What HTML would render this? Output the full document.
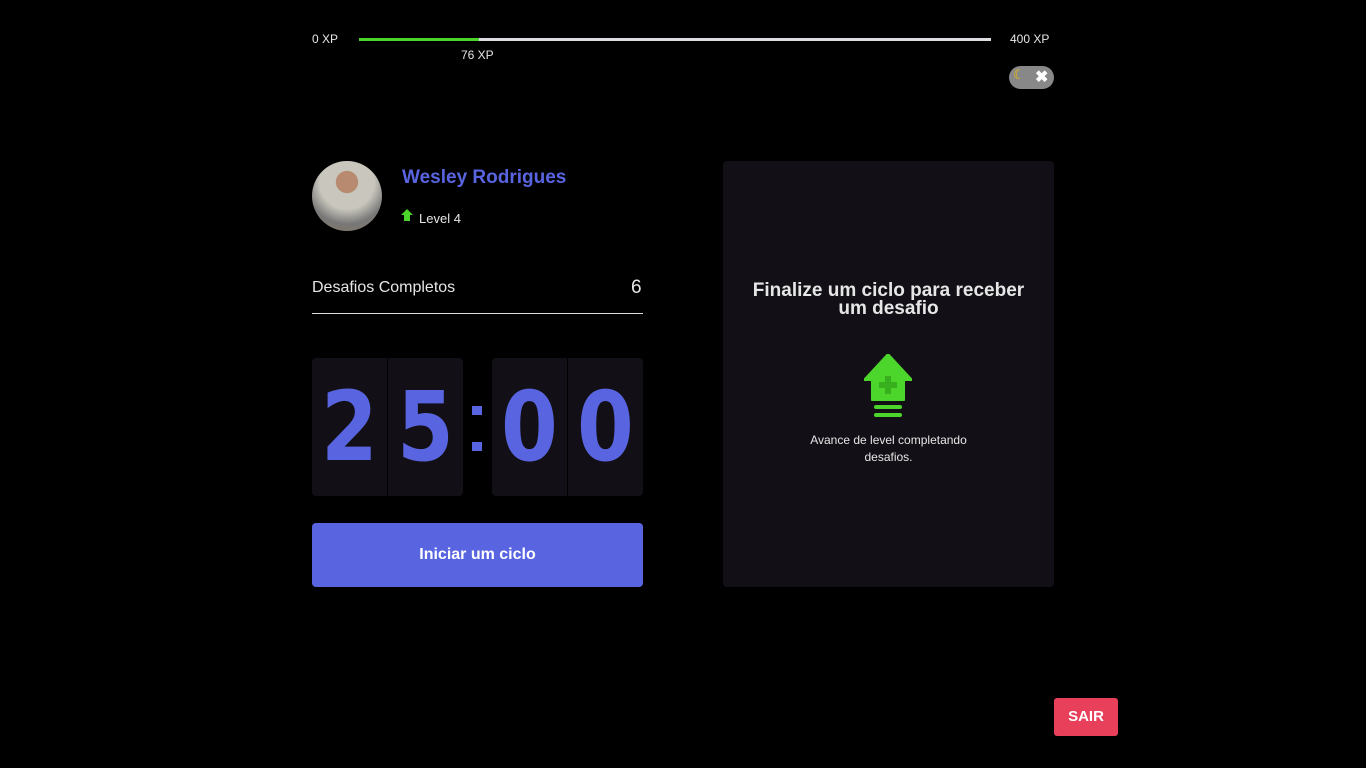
<!DOCTYPE html>
<html><head><meta charset="utf-8"><style>
body{margin:0;width:1366px;height:768px;background:#000;font-family:"Liberation Sans",sans-serif;color:#e6e6e6;position:relative;overflow:hidden}
.a{position:absolute}
.digit{position:absolute;top:358px;width:75px;height:138px;background:#121016;color:#5965e0;font-size:96px;text-align:center;line-height:138px;font-family:"DejaVu Sans",sans-serif;font-weight:bold}
.digit span{display:inline-block;transform:scaleX(0.85)}
</style></head><body>
<div class="a" style="left:312px;top:32px;font-size:12px">0 XP</div>
<div class="a" style="left:359px;top:38px;width:632px;height:3px;background:#dcdde0"></div>
<div class="a" style="left:359px;top:38px;width:120px;height:3px;background:#4cd62b"></div>
<div class="a" style="left:461px;top:48px;font-size:12px">76 XP</div>
<div class="a" style="left:1010px;top:32px;font-size:12px">400 XP</div>
<div class="a" style="left:1009px;top:66px;width:45px;height:23px;border-radius:12px;background:#888"></div>
<div class="a" style="left:1013px;top:67px;font-size:13px;color:#f5c400">☾</div>
<div class="a" style="left:1035px;top:67px;font-size:16px;color:#fff;font-weight:bold">✖</div>

<div class="a" style="left:312px;top:161px;width:70px;height:70px;border-radius:50%;background:radial-gradient(circle at 50% 30%,#b88a70 0 18%,#c9c7bd 19% 45%,#777 70%,#8a7a60)"></div>
<div class="a" style="left:402px;top:167px;font-size:19px;font-weight:bold;color:#5965e0">Wesley Rodrigues</div>
<svg class="a" style="left:401px;top:209px" width="12" height="12"><path d="M6 0L12 6H9V12H3V6H0Z" fill="#4cd62b"/></svg>
<div class="a" style="left:419px;top:211px;font-size:13px">Level 4</div>
<div class="a" style="left:312px;top:279px;font-size:16px">Desafios Completos</div>
<div class="a" style="left:631px;top:277px;font-size:19px">6</div>
<div class="a" style="left:312px;top:313px;width:331px;height:1px;background:#dcdde0"></div>

<div class="digit" style="left:312px;border-radius:4px 0 0 4px"><span>2</span></div>
<div class="digit" style="left:388px;border-radius:0 4px 4px 0"><span>5</span></div>
<div class="a" style="left:472px;top:406px;width:10px;height:9px;background:#5965e0"></div>
<div class="a" style="left:472px;top:442px;width:10px;height:9px;background:#5965e0"></div>
<div class="digit" style="left:492px;border-radius:4px 0 0 4px"><span>0</span></div>
<div class="digit" style="left:568px;border-radius:0 4px 4px 0"><span>0</span></div>

<div class="a" style="left:312px;top:523px;width:331px;height:64px;background:#5965e0;border-radius:4px;color:#fff;font-weight:bold;font-size:16px;text-align:center;line-height:64px">Iniciar um ciclo</div>

<div class="a" style="left:723px;top:161px;width:331px;height:426px;background:#121016;border-radius:4px"></div>
<div class="a" style="left:723px;top:282px;width:331px;text-align:center;font-size:19px;font-weight:bold;line-height:18px">Finalize um ciclo para receber<br>um desafio</div>
<svg class="a" style="left:864px;top:354px" width="48" height="66"><path d="M24 0L48 26H40V46H8V26H0Z" fill="#4cd62b" stroke="#4cd62b" stroke-linejoin="round" stroke-width="2"/><path d="M21 28h6v-6h-6v6h-6v6h6v6h6v-6h6v-6" fill="#38b01e"/><rect x="10" y="51" width="28" height="4" rx="2" fill="#4cd62b"/><rect x="10" y="59" width="28" height="4" rx="2" fill="#4cd62b"/></svg>
<div class="a" style="left:723px;top:432px;width:331px;text-align:center;font-size:12px;line-height:17px">Avance de level completando<br>desafios.</div>

<div class="a" style="left:1054px;top:698px;width:64px;height:38px;background:#e83f5b;border-radius:3px;color:#fff;font-weight:bold;font-size:15px;text-align:center;line-height:38px">SAIR</div>
</body></html>
